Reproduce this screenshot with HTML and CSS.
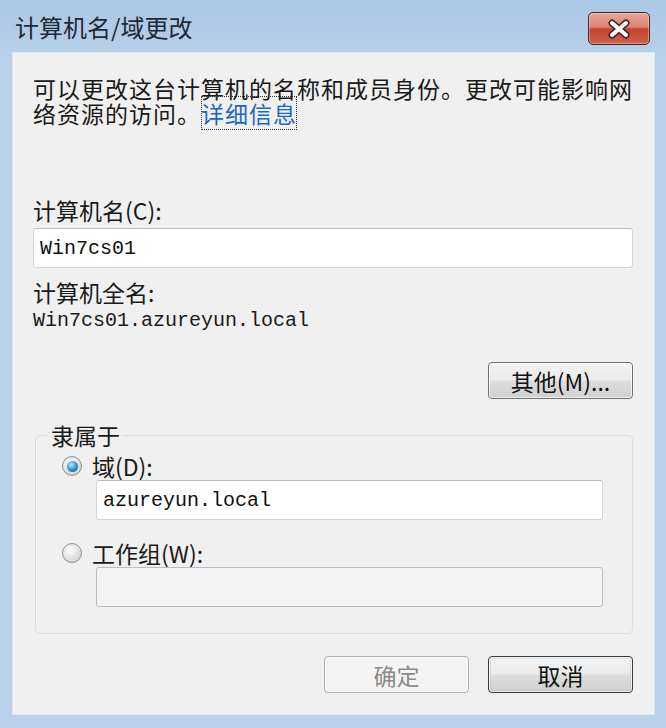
FILE: index.html
```html
<!DOCTYPE html>
<html lang="zh-CN">
<head>
    <meta charset="UTF-8">
    <title>计算机名/域更改</title>
    <meta name="viewport" content="width=device-width, initial-scale=1.0">
    <link rel="stylesheet" href="styles.css">
</head>
<body>
    <div class="window">
        <div class="titlebar">
            <span class="title">计算机名/域更改</span>
            <button class="close" type="button" aria-label="关闭">
                <svg width="26" height="20" viewBox="0 0 26 20">
                    <path d="M6 4 L20 16 M20 4 L6 16" stroke="#3a2a2a" stroke-width="7" stroke-linecap="round"/>
                    <path d="M6 4 L20 16 M20 4 L6 16" stroke="#ffffff" stroke-width="4" stroke-linecap="round"/>
                </svg>
            </button>
        </div>
        <div class="panel">
            <p class="intro">可以更改这台计算机的名称和成员身份。更改可能影响网<br>络资源的访问。<a class="link" href="#">详细信息</a></p>

            <label class="label first">计算机名(C):</label>
            <div class="field">Win7cs01</div>

            <div class="label">计算机全名:</div>
            <div class="mono">Win7cs01.azureyun.local</div>

            <div class="row-right">
                <button class="btn" type="button">其他(M)...</button>
            </div>

            <fieldset class="group">
                <legend>隶属于</legend>
                <div class="radio-row">
                    <span class="radio checked"></span>
                    <span>域(D):</span>
                </div>
                <div class="field small">azureyun.local</div>
                <div class="radio-row">
                    <span class="radio"></span>
                    <span>工作组(W):</span>
                </div>
                <div class="field small disabled"></div>
            </fieldset>

            <div class="actions">
                <button class="btn" type="button" disabled>确定</button>
                <button class="btn default" type="button">取消</button>
            </div>
        </div>
    </div>
</body>
</html>
```

FILE: styles.css
```css
html { box-sizing: border-box; }
*, *::before, *::after { box-sizing: inherit; }
body {
    margin: 0;
    background: #b9d1ea;
    font-family: 'Noto Sans CJK SC', 'Noto Sans', sans-serif;
    color: #1a1a1a;
}
.window {
    width: 666px;
    height: 728px;
    display: flex;
    flex-direction: column;
    background: linear-gradient(#abc7e4, #b9d1ea 60px);
}
.titlebar {
    height: 52px;
    display: flex;
    align-items: flex-start;
    justify-content: space-between;
    padding: 0 16px 0 15px;
}
.title {
    font-size: 24px;
    line-height: 24px;
    margin-top: 15px;
    color: #1e2a38;
}
.close {
    margin-top: 12px;
    width: 62px;
    height: 33px;
    border: 1px solid #3b2424;
    border-radius: 5px;
    padding: 0;
    display: flex;
    align-items: center;
    justify-content: center;
    background: linear-gradient(#eaa596 0%, #dd8373 45%, #c4432c 52%, #d0624c 100%);
    box-shadow: inset 0 0 0 1px rgba(255,255,255,0.35);
}
.panel {
    margin: 0 11px 13px 12px;
    flex: 1;
    background: #f0f0f0;
    border: 1px solid #dfe6ee;
    padding: 23px 21px 0 20px;
}
.intro {
    margin: 0;
    font-size: 23px;
    line-height: 25px;
    letter-spacing: 1px;
    white-space: nowrap;
}
.link {
    color: #1c66c6;
    text-decoration: none;
    outline: 1px dotted #333;
    outline-offset: -1px;
}
.label {
    display: block;
    font-size: 23px;
    line-height: 28px;
    margin-top: 10px;
}
.label.first {
    margin-top: 70px;
}
.field {
    height: 40px;
    margin-top: 4px;
    background: #ffffff;
    border: 1px solid #d2d5da;
    border-top-color: #b8bbc2;
    border-radius: 3px;
    padding: 0 6px;
    display: flex;
    align-items: center;
    font-family: 'Liberation Mono', 'DejaVu Sans Mono', monospace;
    font-size: 20px;
    color: #111;
}
.mono {
    font-family: 'Liberation Mono', 'DejaVu Sans Mono', monospace;
    font-size: 20px;
    line-height: 24px;
    margin-top: 3px;
}
.row-right {
    display: flex;
    justify-content: flex-end;
    margin-top: 29px;
}
.btn {
    width: 145px;
    height: 37px;
    border: 1px solid #707070;
    border-radius: 4px;
    background: linear-gradient(#f3f3f3 0%, #ebebeb 48%, #dddddd 52%, #d0d0d0 100%);
    box-shadow: inset 0 0 0 1px rgba(255,255,255,0.7);
    font-family: inherit;
    font-size: 23px;
    color: #111;
    padding: 0;
}
.btn:disabled {
    border-color: #adb2b5;
    background: #f4f4f4;
    color: #8a8a8a;
}
.group {
    margin: 24px 0 0 2px;
    border: 1px solid #d5dfe5;
    border-radius: 5px;
    padding: 0 29px 24px 26px;
    height: 211px;
}
.group legend {
    font-size: 23px;
    line-height: 24px;
    padding: 0 2px;
    margin-left: -13px;
}
.radio-row {
    display: flex;
    align-items: center;
    gap: 10px;
    font-size: 23px;
    line-height: 28px;
    margin-top: 5px;
}
.group .field + .radio-row {
    margin-top: 19px;
}
.radio {
    width: 20px;
    height: 20px;
    border-radius: 50%;
    border: 1px solid #8e8f8f;
    background: radial-gradient(circle at 40% 35%, #ffffff, #d6d6d6 70%, #c2c2c2);
    display: flex;
    align-items: center;
    justify-content: center;
}
.radio.checked::after {
    content: "";
    width: 11px;
    height: 11px;
    border-radius: 50%;
    background: radial-gradient(circle at 40% 35%, #b9ecff, #2c8bd0 55%, #0d4f8c);
}
.field.small {
    margin-left: 34px;
    margin-top: 0;
}
.field.disabled {
    background: #f4f4f4;
    border-color: #b9bcc0;
}
.actions {
    display: flex;
    justify-content: flex-end;
    gap: 19px;
    margin-top: 22px;
}
.btn.default {
    border-color: #3c3c3c;
    box-shadow: inset 0 0 0 1px rgba(255,255,255,0.7), inset 0 0 0 2px rgba(120,180,220,0.25);
}
```
